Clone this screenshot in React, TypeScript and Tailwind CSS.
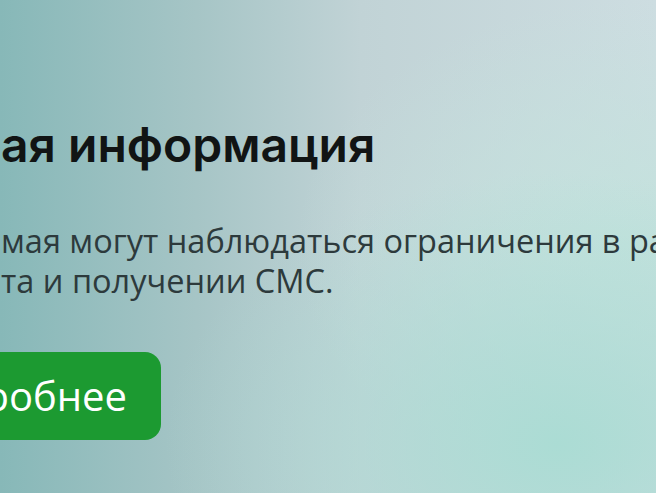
export default function App() {
  return (
    <div className="relative h-[493px] w-full overflow-hidden bg-[radial-gradient(ellipse_60%_55%_at_85%_90%,#abdcd4_0%,rgba(171,220,212,0)_100%),radial-gradient(ellipse_50%_50%_at_95%_50%,#c3e2dd_0%,rgba(195,226,221,0)_100%),linear-gradient(90deg,#87b8b8_0%,#a6c5c6_30%,#c1d3d6_55%,#cddde1_100%)]">
      <div className="pl-[1px] pt-[116px]">
        <h2 className="flex whitespace-nowrap font-['Inter',sans-serif] text-[48px] font-semibold leading-[58px] text-[#111414]">
          <span className="flex w-0 justify-end">Важн</span>
          <span>ая информация</span>
        </h2>

        <div className="mt-[47px] font-['Open_Sans',sans-serif] text-[32.5px] leading-[40px] text-[#2d3a3c]">
          <p className="flex whitespace-nowrap">
            <span className="flex w-0 justify-end">С 8 по 9 </span>
            <span>мая могут наблюдаться ограничения в работе мобильного</span>
          </p>
          <p className="flex whitespace-nowrap">
            <span className="flex w-0 justify-end">интерне</span>
            <span>та и получении СМС.</span>
          </p>
        </div>

        <div className="mt-[51px] flex w-[160px] justify-end">
          <button className="flex h-[88px] shrink-0 items-center whitespace-nowrap rounded-[16px] bg-[#1c9a31] px-[34px] font-['Open_Sans',sans-serif] text-[40px] text-white">
            Подробнее
          </button>
        </div>
      </div>
    </div>
  );
}
